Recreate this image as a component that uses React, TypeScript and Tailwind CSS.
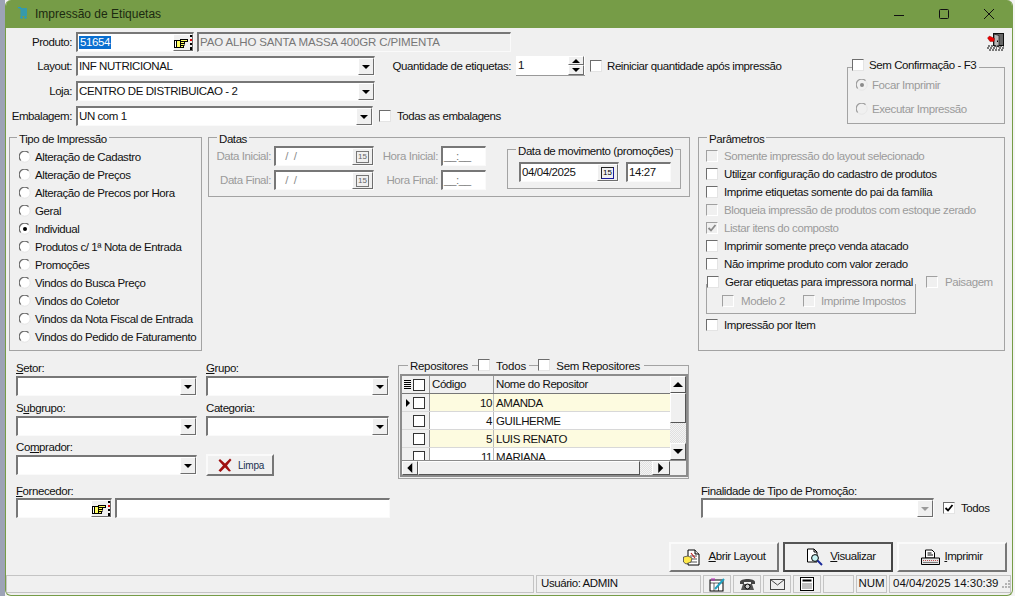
import React from "react";

const sunken = "border-t-2 border-l-2 border-r border-b border-t-[#777777] border-l-[#777777] border-r-[#fafafa] border-b-[#fafafa]";
const raised = "border border-t-white border-l-white border-r-[#6e6e6e] border-b-[#6e6e6e]";
const groupBorder = "border border-[#a3a3a3]";

function Label({ children, className = "" }: { children: React.ReactNode; className?: string }) {
  return <span className={`whitespace-nowrap leading-[14px] ${className}`}>{children}</span>;
}

function Check({ checked, disabled }: { checked?: boolean; disabled?: boolean }) {
  return (
    <div
      className={`w-[12px] h-[12px] shrink-0 border flex items-center justify-center ${
        disabled
          ? "bg-[#f0f0f0] border-t-[#a0a0a0] border-l-[#a0a0a0] border-r-white border-b-white"
          : "bg-white border-t-[#6d6d6d] border-l-[#6d6d6d] border-r-[#e4e4e4] border-b-[#e4e4e4]"
      }`}
    >
      {checked && (
        <svg width="10" height="10" viewBox="0 0 10 10">
          <path d="M1.5 5 L4 7.5 L8.5 2" fill="none" stroke={disabled ? "#8a8a8a" : "#000"} strokeWidth="1.8" />
        </svg>
      )}
    </div>
  );
}

function CheckRow({ text, checked, disabled, className = "", gap = "gap-[6px]" }: { text: React.ReactNode; checked?: boolean; disabled?: boolean; className?: string; gap?: string }) {
  return (
    <div className={`flex items-center ${gap} ${className}`}>
      <Check checked={checked} disabled={disabled} />
      <Label className={disabled ? "text-[#9b9b9b]" : ""}>{text}</Label>
    </div>
  );
}

function Radio({ text, checked, disabled }: { text: string; checked?: boolean; disabled?: boolean }) {
  return (
    <div className="flex items-center gap-[4px] h-[18px]">
      <svg width="12" height="12" viewBox="0 0 12 12" className="shrink-0">
        <circle cx="6" cy="6" r="5" fill={disabled ? "#f0f0f0" : "#ffffff"} />
        <path d="M1.8 9.6 A5.3 5.3 0 0 1 9.6 1.8" fill="none" stroke={disabled ? "#a0a0a0" : "#6d6d6d"} strokeWidth="1.3" />
        <path d="M9.6 1.8 A5.3 5.3 0 0 1 1.8 9.6" fill="none" stroke="#e6e6e6" strokeWidth="1" />
        {checked && <circle cx="6" cy="6" r="2" fill={disabled ? "#8a8a8a" : "#000"} />}
      </svg>
      <Label className={disabled ? "text-[#9b9b9b]" : ""}>{text}</Label>
    </div>
  );
}

function Arrow({ dir = "down", color = "#000", scale = 1 }: { dir?: "down" | "up" | "left" | "right"; color?: string; scale?: number }) {
  const d = { down: "M0 0 H8 L4 4 Z", up: "M0 4 H8 L4 0 Z", left: "M5 0 V8 L1 4 Z", right: "M1 0 V8 L5 4 Z" }[dir];
  const vertical = dir === "down" || dir === "up";
  return (
    <svg width={(vertical ? 8 : 6) * scale} height={(vertical ? 4 : 8) * scale} viewBox={vertical ? "0 0 8 4" : "0 0 6 8"}>
      <path d={d} fill={color} />
    </svg>
  );
}

function Combo({ text, className = "", disabled }: { text?: string; className?: string; disabled?: boolean }) {
  return (
    <div className={`h-[20px] flex bg-white ${sunken} ${className}`}>
      <div className="flex-1 pl-[1px] leading-[17px] whitespace-nowrap overflow-hidden">{text}</div>
      <div className={`w-[16px] h-full bg-[#f0f0f0] flex items-center justify-center ${raised}`}>
        <Arrow color={disabled ? "#9b9b9b" : "#000"} />
      </div>
    </div>
  );
}

function Hand() {
  return (
    <svg width="18" height="16" viewBox="0 0 18 16">
      <rect x="0.5" y="5.5" width="2" height="7" fill="#fff" stroke="#000" />
      <rect x="2.5" y="5.5" width="4" height="7" fill="#ffff60" stroke="#000" />
      <rect x="6.5" y="4.5" width="7" height="2" fill="#ffff60" stroke="#000" />
      <rect x="6.5" y="6.5" width="4" height="2" fill="#ffff60" stroke="#000" />
      <rect x="6.5" y="8.5" width="3.5" height="2" fill="#ffff60" stroke="#000" />
      <rect x="6.5" y="10.5" width="3" height="2" fill="#ffff60" stroke="#000" />
      <rect x="16" y="0" width="2" height="2" fill="#000" />
      <rect x="16" y="4" width="2" height="2" fill="#e00000" />
      <rect x="16" y="8" width="2" height="2" fill="#000" />
      <rect x="16" y="12" width="2" height="3" fill="#000" />
    </svg>
  );
}

function LookupButton() {
  return (
    <div className={`w-[20px] h-full bg-[#f0f0f0] flex items-center justify-center ${raised}`}>
      <Hand />
    </div>
  );
}

function DateField({ value, disabled, className = "" }: { value: string; disabled?: boolean; className?: string }) {
  return (
    <div className={`h-[20px] w-[100px] flex bg-white ${sunken} ${className}`}>
      <div className={`flex-1 pl-[1px] leading-[17px] whitespace-nowrap ${disabled ? "text-[#8a8a8a]" : ""}`}>{value}</div>
      <div className={`w-[21px] h-full bg-[#f0f0f0] flex items-center justify-center ${raised}`}>
        <div className={`w-[13px] h-[12px] border flex items-center justify-center text-[8px] leading-none tracking-normal ${disabled ? "border-[#777] text-[#666]" : "border-[#222] text-[#000] border-r-[#1a1a9a] border-b-[#1a1a9a]"}`}>15</div>
      </div>
    </div>
  );
}

function TextField({ value, className = "", muted }: { value?: string; className?: string; muted?: boolean }) {
  return (
    <div className={`h-[20px] bg-white pl-[1px] leading-[17px] whitespace-nowrap ${sunken} ${muted ? "text-[#777]" : ""} ${className}`}>{value}</div>
  );
}

function Group({ title, className = "", children, legendClass = "ml-[8px]" }: { title: React.ReactNode; className?: string; children: React.ReactNode; legendClass?: string }) {
  return (
    <fieldset className={`${groupBorder} ${className}`}>
      <legend className={`h-[18px] pt-[4px] px-[2px] leading-[14px] whitespace-nowrap ${legendClass}`}>{title}</legend>
      {children}
    </fieldset>
  );
}

function ScrollBtn({ dir, className = "" }: { dir: "up" | "down" | "left" | "right"; className?: string }) {
  return (
    <div className={`bg-[#f0f0f0] flex items-center justify-center shrink-0 border border-t-white border-l-white border-r-[#555] border-b-[#555] ${className}`}>
      <Arrow dir={dir} scale={1.25} />
    </div>
  );
}

const dither = "bg-[repeating-conic-gradient(#f4f4f4_0%_25%,#e0e0e0_0%_50%)] bg-[length:2px_2px]";

const rows = [
  { c: "10", n: "AMANDA", y: true, cur: true },
  { c: "4", n: "GUILHERME" },
  { c: "5", n: "LUIS RENATO", y: true },
  { c: "11", n: "MARIANA" },
];

function Grid() {
  return (
    <div className="ml-[1px] w-[288px] h-[103px] border-2 border-[#8c8c8c] bg-white flex flex-col overflow-hidden">
      <div className="flex h-[84px]">
        <div className="w-[268px] overflow-hidden">
          <div className="flex h-[18px] bg-[#f0f0f0] border-b border-[#777]">
            <div className="w-[11px] flex flex-col gap-[1px] items-center justify-center">
              <div className="w-[7px] h-[1px] bg-black" />
              <div className="w-[7px] h-[1px] bg-black" />
              <div className="w-[7px] h-[1px] bg-black" />
              <div className="w-[7px] h-[1px] bg-black" />
              <div className="w-[7px] h-[1px] bg-black" />
            </div>
            <div className="w-[17px] flex items-center border-r border-[#999]"><div className="w-[12px] h-[12px] border border-[#333] bg-white" /></div>
            <div className="w-[64px] pl-[2px] leading-[17px] border-r border-[#999]">Código</div>
            <div className="flex-1 pl-[2px] leading-[17px]">Nome do Repositor</div>
          </div>
          {rows.map((r) => (
            <div key={r.n} className="flex h-[18px] border-b border-[#d8d8d8]">
              <div className="w-[11px] bg-[#f0f0f0] flex items-center justify-center">{r.cur && <Arrow dir="right" />}</div>
              <div className="w-[17px] bg-[#f0f0f0] flex items-center border-r border-[#999]"><div className="w-[12px] h-[12px] border border-[#333] bg-white" /></div>
              <div className={`w-[64px] pr-[1px] text-right leading-[19px] border-r border-[#bbb] ${r.y ? "bg-[#fdfbe0]" : "bg-white"}`}>{r.c}</div>
              <div className={`flex-1 pl-[2px] leading-[19px] ${r.y ? "bg-[#fdfbe0]" : "bg-white"}`}>{r.n}</div>
            </div>
          ))}
        </div>
        <div className="w-[16px] flex flex-col bg-[#f0f0f0]">
          <ScrollBtn dir="up" className="h-[17px]" />
          <div className="h-[30px] bg-[#f0f0f0] border border-t-white border-l-white border-r-[#555] border-b-[#555]" />
          <div className={`flex-1 ${dither}`} />
          <ScrollBtn dir="down" className="h-[17px]" />
        </div>
      </div>
      <div className="flex h-[17px] bg-[#f0f0f0] border-t border-[#8c8c8c]">
        <ScrollBtn dir="left" className="w-[16px]" />
        <div className="w-[222px] border border-t-white border-l-white border-r-[#555] border-b-[#555]" />
        <div className={`w-[12px] ${dither}`} />
        <ScrollBtn dir="right" className="w-[18px]" />
        <div className="flex-1" />
      </div>
    </div>
  );
}

function ActionButton({ icon, children, strong, className = "" }: { icon: React.ReactNode; children: React.ReactNode; strong?: boolean; className?: string }) {
  return (
    <div className={`w-[110px] h-[30px] bg-[#f0f0f0] flex items-center justify-center ${className} ${strong ? "border-2 border-t-[#555] border-l-[#555] border-r-[#444] border-b-[#444]" : "border-2 border-t-[#fafafa] border-l-[#fafafa] border-r-[#777] border-b-[#777]"}`}>
      {icon}
      <span className="whitespace-nowrap">{children}</span>
    </div>
  );
}

function AbrirIcon() {
  return (
    <svg width="17" height="17" viewBox="0 0 17 17">
      <path d="M5 1 H12 L16 5 V16 H5 Z" fill="#fff" stroke="#000" />
      <path d="M12 1 V5 H16" fill="#ddd" stroke="#000" />
      <path d="M7 7 H14 M7 10 H14 M7 13 H14" stroke="#555" />
      <path d="M0.5 8 L5 7 L9 9 L8 13 L3 15 L0.5 13 Z" fill="#ffe94a" stroke="#444" strokeWidth="0.8" />
      <path d="M8 4 L12 9" stroke="#c02020" strokeWidth="1.2" />
    </svg>
  );
}

function VisualizarIcon() {
  return (
    <svg width="17" height="18" viewBox="0 0 17 18">
      <path d="M1.5 1 H8 L11 4 V14 H1.5 Z" fill="#fff" stroke="#000" />
      <path d="M8 1 V4 H11" fill="none" stroke="#000" />
      <circle cx="9" cy="10" r="3.4" fill="#c8f4f4" stroke="#000" />
      <path d="M11.5 12.5 L16 17" stroke="#1a2a9a" strokeWidth="2" />
    </svg>
  );
}

function PrinterIcon() {
  return (
    <svg width="19" height="17" viewBox="0 0 19 17">
      <path d="M4.5 1 H11 L13.5 3.5 V9 H4.5 Z" fill="#fff" stroke="#000" />
      <path d="M6.5 4 H10.5 M6.5 6 H12" stroke="#000" />
      <path d="M0.5 9 H18.5 V15.5 H0.5 Z" fill="#e4e4e4" stroke="#000" />
      <path d="M2 11.5 H17" stroke="#c05050" strokeDasharray="1 1" />
      <path d="M2 13.5 H17" stroke="#777" />
    </svg>
  );
}

function DoorIcon() {
  return (
    <svg width="18" height="18" viewBox="0 0 18 18">
      <rect x="6.5" y="0.5" width="10" height="12" fill="#666" stroke="#111" />
      <path d="M7 1 L12 2.5 V14 L7 12.5 Z" fill="#b8b8b8" stroke="#111" strokeWidth="0.7" />
      <path d="M10.5 7.5 V9" stroke="#000" />
      <path d="M0.5 5 L2.5 3 L7.5 5.5 L7 8.5 L3 8.5 Z" fill="#ee0000" stroke="#700" strokeWidth="0.4" />
      <path d="M1 13 H17 M0 15 H10 M12 15 H18 M2 17 H16" stroke="#000" strokeWidth="1.2" strokeDasharray="2 1" />
    </svg>
  );
}

function CartIcon() {
  return (
    <svg width="11" height="12" viewBox="0 0 11 12">
      <path d="M1 0.5 H3 L4 2 H10 M3.5 4 H10 M3.5 6 H10 M3.5 8 H10" stroke="#2299cc" strokeWidth="1.5" fill="none" />
      <circle cx="4.5" cy="10.5" r="1.2" fill="#2299cc" />
      <circle cx="8.5" cy="10.5" r="1.2" fill="#2299cc" />
    </svg>
  );
}

function StatusCell({ className = "", children }: { className?: string; children?: React.ReactNode }) {
  return <div className={`h-full border border-[#c4c4c4] flex items-center justify-center whitespace-nowrap ${className}`}>{children}</div>;
}

const emptyDate = "\u00a0\u00a0\u00a0/\u00a0\u00a0/";

export default function App() {
  return (
    <div className="w-[1015px] h-[596px] overflow-hidden bg-[#f2f2f2] flex font-['Liberation_Sans',sans-serif] text-[11.5px] text-[#111] tracking-[-0.42px]">
      <div className="w-[5px] h-full bg-[#9da3b6] shrink-0" />
      <div className="w-[1008px] h-[596px] shrink-0 flex flex-col bg-[#f0f0f0] border-x border-b border-[#769c47] rounded-[6px] overflow-hidden">
        {/* Title bar */}
        <div className="h-[28px] shrink-0 bg-[#769c47] flex items-center tracking-normal text-[#1c2a10]">
          <div className="ml-[11px] -mt-[3px]"><CartIcon /></div>
          <span className="ml-[7px] text-[12px]">Impressão de Etiquetas</span>
          <div className="ml-auto flex items-center mr-[18px] gap-[35px]">
            <svg width="10" height="10" viewBox="0 0 10 10"><path d="M0 6.5 H10" stroke="#111" /></svg>
            <svg width="10" height="10" viewBox="0 0 10 10"><rect x="0.5" y="0.5" width="9" height="9" rx="1" fill="none" stroke="#111" /></svg>
            <svg width="10" height="10" viewBox="0 0 10 10"><path d="M0 0 L10 10 M10 0 L0 10" stroke="#111" /></svg>
          </div>
        </div>

        {/* Top */}
        <div className="h-[100px] shrink-0 flex pt-[4px]">
          <div className="flex flex-col">
            <div className="flex items-center h-[20px]">
              <Label className="w-[66px] text-right">Produto:</Label>
              <div className={`ml-[4px] w-[118px] h-[20px] flex bg-white ${sunken}`}>
                <div className="flex-1 pl-[1px] leading-[16px]"><span className="bg-[#0a6fd0] text-white px-[1px] inline-block h-[13px] leading-[13px]">51654</span></div>
                <LookupButton />
              </div>
              <TextField value="PAO ALHO SANTA MASSA 400GR C/PIMENTA" muted className="ml-[3px] w-[314px] !bg-[#f0f0f0] tracking-[-0.14px]" />
            </div>
            <div className="flex items-center h-[20px] mt-[4px]">
              <Label className="w-[66px] text-right">Layout:</Label>
              <Combo text="INF NUTRICIONAL" className="ml-[4px] w-[299px]" />
              <Label className="ml-[17px] w-[119px] text-right">Quantidade de etiquetas:</Label>
              <div className="ml-[5px] w-[69px] h-[20px] bg-white flex border-b border-[#999]">
                <div className="flex-1 pl-[2px] leading-[18px]">1</div>
                <div className="w-[16px] flex flex-col bg-[#f0f0f0] mr-[1px]">
                  <div className={`h-[9px] flex items-center justify-center ${raised}`}><Arrow dir="up" /></div>
                  <div className={`h-[10px] flex items-center justify-center ${raised}`}><Arrow dir="down" /></div>
                </div>
              </div>
              <CheckRow text="Reiniciar quantidade após impressão" className="ml-[5px]" gap="gap-[5px]" />
            </div>
            <div className="flex items-center h-[20px] mt-[5px]">
              <Label className="w-[66px] text-right">Loja:</Label>
              <Combo text="CENTRO DE DISTRIBUICAO - 2" className="ml-[4px] w-[299px]" />
            </div>
            <div className="flex items-center h-[20px] mt-[5px]">
              <Label className="w-[66px] text-right">Embalagem:</Label>
              <Combo text="UN com 1" className="ml-[4px] w-[297px]" />
              <CheckRow text="Todas as embalagens" className="ml-[6px]" />
            </div>
          </div>
          <div className="ml-auto mr-[7px] flex flex-col items-end">
            <div className="mt-[1px]"><DoorIcon /></div>
            <fieldset className={`${groupBorder} w-[158px] h-[66px] mt-[7px]`}>
              <legend className="h-[18px] ml-[4px] pr-[3px] flex items-center gap-[5px] pb-[4px]"><Check /><Label>Sem Confirmação - F3</Label></legend>
              <div className="pl-[8px]">
                <Radio text="Focar Imprimir" checked disabled />
                <div className="mt-[6px]"><Radio text="Executar Impressão" disabled /></div>
              </div>
            </fieldset>
          </div>
        </div>

        {/* Middle */}
        <div className="h-[223px] shrink-0 flex items-start">
          <Group title="Tipo de Impressão" className="ml-[3px] w-[193px] h-[223px]" legendClass="ml-[7px]">
            <div className="pl-[9px] pt-[2px]">
              {[
                "Alteração de Cadastro",
                "Alteração de Preços",
                "Alteração de Precos por Hora",
                "Geral",
                "Individual",
                "Produtos c/ 1ª Nota de Entrada",
                "Promoções",
                "Vindos do Busca Preço",
                "Vindos do Coletor",
                "Vindos da Nota Fiscal de Entrada",
                "Vindos do Pedido de Faturamento",
              ].map((t) => (
                <Radio key={t} text={t} checked={t === "Individual"} />
              ))}
            </div>
          </Group>

          <Group title="Datas" className="ml-[6px] w-[482px] h-[69px]">
            <div className="flex items-start">
              <div className="flex flex-col gap-[4px] text-[#9b9b9b]">
                <div className="flex items-center">
                  <Label className="w-[62px] text-right">Data Inicial:</Label>
                  <DateField value={emptyDate} disabled className="ml-[3px]" />
                  <Label className="w-[64px] text-right">Hora Inicial:</Label>
                  <TextField value="__:__" muted className="ml-[3px] w-[45px]" />
                </div>
                <div className="flex items-center">
                  <Label className="w-[62px] text-right">Data Final:</Label>
                  <DateField value={emptyDate} disabled className="ml-[3px]" />
                  <Label className="w-[64px] text-right">Hora Final:</Label>
                  <TextField value="__:__" muted className="ml-[3px] w-[45px]" />
                </div>
              </div>
              <Group title="Data de movimento (promoções)" className="ml-[21px] -mt-[6px] w-[174px] h-[49px]">
                <div className="flex gap-[7px] pl-[11px] pt-[4px]">
                  <DateField value="04/04/2025" />
                  <TextField value="14:27" className="w-[45px]" />
                </div>
              </Group>
            </div>
          </Group>

          <Group title="Parâmetros" className="ml-[8px] w-[307px] h-[223px]">
            <div className="pl-[7px] pt-[1px] flex flex-col">
              <CheckRow className="h-[18px]" disabled text="Somente impressão do layout selecionado" />
              <CheckRow className="h-[18px]" text={<>Utili<u>z</u>ar configuração do cadastro de produtos</>} />
              <CheckRow className="h-[18px]" text="Imprime etiquetas somente do pai da família" />
              <CheckRow className="h-[18px]" disabled text="Bloqueia impressão de produtos com estoque zerado" />
              <CheckRow className="h-[18px]" disabled checked text="Listar itens do composto" />
              <CheckRow className="h-[18px]" text="Imprimir somente preço venda atacado" />
              <CheckRow className="h-[18px]" text="Não imprime produto com valor zerado" />
              <div className="flex items-start mt-[2px]">
                <fieldset className={`${groupBorder} w-[210px] h-[39px]`}>
                  <legend className="h-[18px] pb-[4px] pr-[2px] flex items-center gap-[6px]"><Check /><Label>Gerar etiquetas para impressora normal</Label></legend>
                  <div className="flex items-center pl-[15px] h-[16px]">
                    <CheckRow disabled text="Modelo 2" gap="gap-[7px]" className="w-[81px]" />
                    <CheckRow disabled text="Imprime Impostos" gap="gap-[6px]" />
                  </div>
                </fieldset>
                <CheckRow disabled text="Paisagem" gap="gap-[7px]" className="ml-[10px] h-[14px]" />
              </div>
              <CheckRow className="h-[18px] mt-[2px]" text="Impressão por Item" />
            </div>
          </Group>
        </div>

        {/* Bottom */}
        <div className="h-[191px] shrink-0 flex items-start">
          <div className="ml-[10px] w-[374px] pt-[10px] flex flex-col">
            <div className="flex">
              <div className="w-[190px]"><Label className="block"><u>S</u>etor:</Label><Combo className="mt-[1px] w-[181px]" /></div>
              <div className="flex-1"><Label className="block"><u>G</u>rupo:</Label><Combo className="mt-[1px] w-[183px]" /></div>
            </div>
            <div className="flex mt-[5px]">
              <div className="w-[190px]"><Label className="block">S<u>u</u>bgrupo:</Label><Combo className="mt-[1px] w-[181px]" /></div>
              <div className="flex-1"><Label className="block">Categoria:</Label><Combo className="mt-[1px] w-[183px]" /></div>
            </div>
            <div className="flex mt-[4px] items-end">
              <div className="w-[190px]"><Label className="block">Co<u>m</u>prador:</Label><Combo className="mt-[1px] w-[181px]" /></div>
              <div className="w-[68px] h-[22px] -mb-[1px] pl-[2px] bg-[#f0f0f0] flex items-center justify-center gap-[6px] border-2 border-t-[#fafafa] border-l-[#fafafa] border-r-[#777] border-b-[#777]">
                <svg width="14" height="14" viewBox="0 0 14 14"><path d="M2 1 L7 5.5 L12 0.5 L13.5 2 L9 7.5 L13 13 L11 13.5 L7 9.5 L2.5 14 L0.5 12.5 L5 7.5 L0.5 2.5 Z" fill="#a01010" /></svg>
                <span className="text-[10px] tracking-[-0.2px] text-[#1b3050]">Limpa</span>
              </div>
            </div>
            <Label className="block mt-[9px]"><u>F</u>ornecedor:</Label>
            <div className="flex mt-0 gap-[3px]">
              <div className={`w-[96px] h-[20px] flex justify-end bg-white ${sunken}`}><LookupButton /></div>
              <TextField className="w-[275px]" />
            </div>
          </div>

          <fieldset className={`${groupBorder} ml-[8px] mt-[5px] w-[291px] h-[123px]`}>
            <legend className="h-[18px] ml-[9px] flex items-start pr-[2px]">
              <Label className="mt-[3px] px-[2px] tracking-[-0.3px]">Repositores</Label>
              <div className="mt-[9px] ml-[2px] w-[6px] h-px bg-[#a3a3a3]" />
              <div className="mt-[3px]"><Check /></div>
              <Label className="mt-[3px] ml-[6px] mr-[3px] tracking-[-0.1px]">Todos</Label>
              <div className="mt-[9px] w-[9px] h-px bg-[#a3a3a3]" />
              <div className="mt-[3px]"><Check /></div>
              <Label className="mt-[3px] ml-[6px] mr-[2px] tracking-[-0.3px]">Sem Repositores</Label>
            </legend>
            <Grid />
          </fieldset>

          <div className="ml-[12px] pt-[133px]">
            <Label className="block">Finalidade de Tipo de Promoção:</Label>
            <div className="flex items-center">
              <Combo disabled className="w-[233px]" />
              <CheckRow checked text="Todos" className="ml-[9px]" />
            </div>
          </div>
        </div>

        {/* Action buttons */}
        <div className="h-[30px] shrink-0 flex justify-end gap-[4px] mr-[5px]">
          <ActionButton icon={<AbrirIcon />} className="gap-[9px]"><u>A</u>brir Layout</ActionButton>
          <ActionButton strong icon={<VisualizarIcon />} className="gap-[7px] pl-[6px]"><u>V</u>isualizar</ActionButton>
          <ActionButton icon={<PrinterIcon />} className="gap-[4px]"><u>I</u>mprimir</ActionButton>
        </div>

        {/* Status bar */}
        <div className="h-[18px] mt-[3px] shrink-0 flex gap-[2px] pr-[1px]">
          <StatusCell className="w-[528px]" />
          <StatusCell className="w-[165px] !justify-start pl-[4px]">Usuário: ADMIN</StatusCell>
          <StatusCell className="w-[28px]">
            <svg width="17" height="15" viewBox="0 0 17 15"><rect x="1" y="3" width="13" height="11" fill="#fff" stroke="#000" /><path d="M1 6 H14 M5 6 V14 M9.5 6 V14" stroke="#000" strokeWidth="0.6" /><path d="M3 1 V4 M5 1 V4" stroke="#c020c0" /><path d="M6 12 L15 2" stroke="#20a0c0" strokeWidth="2" /></svg>
          </StatusCell>
          <StatusCell className="w-[28px]">
            <svg width="17" height="14" viewBox="0 0 17 14"><path d="M1 5 C1 1 16 1 16 5 V7 H12 V5 H5 V7 H1 Z" fill="#444" /><path d="M4 7 H13 L15 13 H2 Z" fill="#555" /><circle cx="8.5" cy="9.5" r="2.5" fill="#ccc" stroke="#000" /></svg>
          </StatusCell>
          <StatusCell className="w-[28px]">
            <svg width="15" height="11" viewBox="0 0 15 11"><rect x="0.5" y="0.5" width="14" height="10" fill="#eee" stroke="#444" /><path d="M0.5 0.5 L7.5 6 L14.5 0.5" fill="none" stroke="#444" /></svg>
          </StatusCell>
          <StatusCell className="w-[28px]">
            <svg width="14" height="14" viewBox="0 0 14 14"><rect x="0.5" y="0.5" width="13" height="13" fill="#fff" stroke="#000" /><rect x="2.5" y="2.5" width="9" height="2" fill="#000" /><path d="M2.5 7 H11.5 M2.5 9 H11.5 M2.5 11 H11.5" stroke="#000" strokeDasharray="1 1" /></svg>
          </StatusCell>
          <StatusCell className="w-[31px]" />
          <StatusCell className="w-[31px] tracking-normal">NUM</StatusCell>
          <StatusCell className="flex-1 !justify-start pl-[3px] tracking-[0px]">
            <span>04/04/2025 14:30:39</span>
            <svg width="11" height="11" viewBox="0 0 11 11" className="ml-auto"><path d="M9 1 H11 V3 H9 Z M6 4 H8 V6 H6 Z M9 4 H11 V6 H9 Z M3 7 H5 V9 H3 Z M6 7 H8 V9 H6 Z M9 7 H11 V9 H9 Z" fill="#b4b4b4" /></svg>
          </StatusCell>
        </div>
      </div>
      <div className="flex-1 h-full bg-[#f4f4f4]" />
    </div>
  );
}
